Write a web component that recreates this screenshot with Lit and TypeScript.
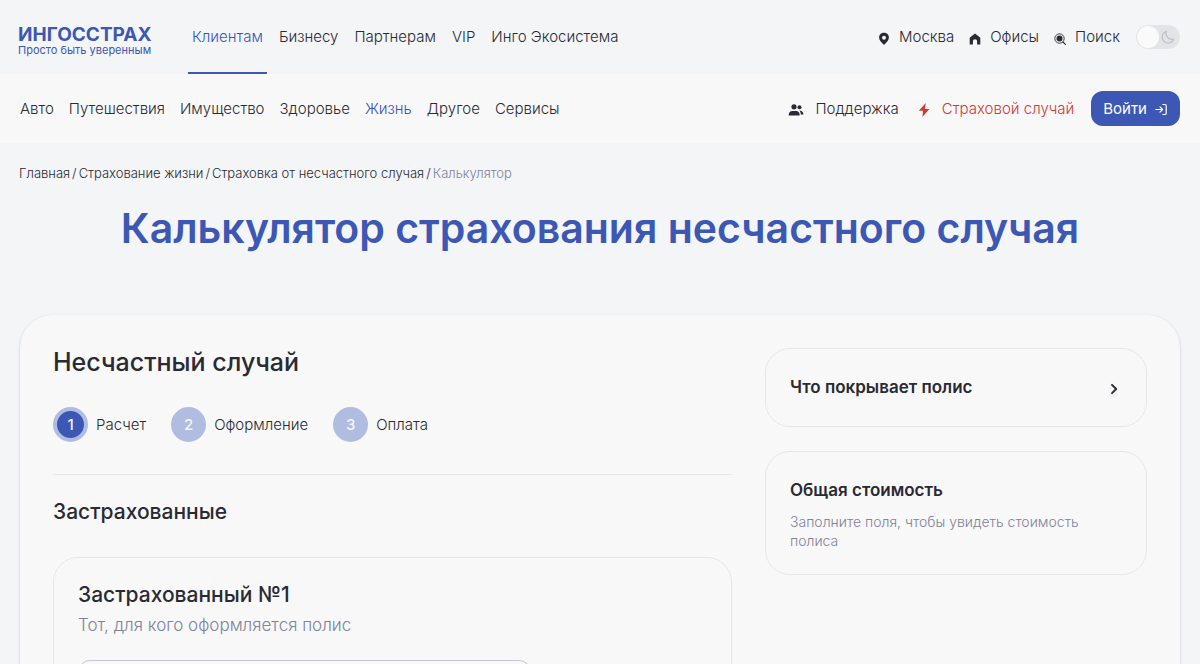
import { LitElement, html, css, svg } from "lit";
import { customElement, state } from "lit/decorators.js";
import { classMap } from "lit/directives/class-map.js";

const pin = svg`<svg class="icon" viewBox="0 0 16 16" aria-hidden="true"><path fill="currentColor" fill-rule="evenodd" d="M8 1.800c-2.800 0-4.900 2-4.900 4.800 0 1.900 1 3.300 2.300 4.700L8 14l2.600-2.700c1.300-1.400 2.300-2.800 2.300-4.700 0-2.800-2.100-4.800-4.900-4.800zm0 2.900a2 2 0 1 1 0 4 2 2 0 0 1 0-4z"/></svg>`;
const house = svg`<svg class="icon" viewBox="0 0 16 16" aria-hidden="true"><path fill="currentColor" d="M8 2.600l4.800 3.700c.4.300.5.600.5 1V13.500h-3.200v-3.200c0-1.300-.9-2.100-2.100-2.100s-2.100.8-2.100 2.100v3.200H2.700V7.300c0-.4.100-.7.500-1z"/></svg>`;
const search = svg`<svg class="icon" viewBox="0 0 16 16" aria-hidden="true"><circle cx="7.500" cy="7.500" r="4.700" fill="none" stroke="currentColor" stroke-width=".9"/><circle cx="7.500" cy="7.500" r="3" fill="currentColor"/><path d="M11 11l2.400 2.400" stroke="currentColor" stroke-width="1.100" stroke-linecap="round"/></svg>`;
const people = svg`<svg class="icon wide" viewBox="0 0 18 16" aria-hidden="true"><g fill="currentColor"><circle cx="7" cy="4.800" r="2.600"/><circle cx="12.500" cy="5.200" r="2"/><path d="M1.800 13.500v-1c0-2.200 1.500-3.400 3.500-3.400h3.800c2 0 3.500 1.200 3.500 3.400v1z"/><path d="M12.300 8.500c2.200 0 4.200 1.400 4.200 4.100h-2.700c0-1.700-.4-3-1.500-4.100z"/></g></svg>`;
const bolt = svg`<svg class="icon" viewBox="0 0 16 16" aria-hidden="true"><path fill="currentColor" d="M9.800 1L2.800 8.700h4.300L6.400 15l7-7.900H8.900z"/></svg>`;
const login = svg`<svg class="icon" viewBox="0 0 16 16" aria-hidden="true"><path d="M2.800 7.500h6.700M7 4.900l2.600 2.600L7 10.100M9.800 2.500h2.100c.8 0 1.300.5 1.300 1.300v7.400c0 .8-.5 1.300-1.300 1.300H9.800" fill="none" stroke="currentColor" stroke-width="1.200" stroke-linecap="round" stroke-linejoin="round"/></svg>`;
const moon = svg`<svg class="moon" viewBox="0 0 16 16" aria-hidden="true"><path d="M6.500 2.300a6 6 0 1 0 7.300 7.800A5.900 5.900 0 0 1 6.500 2.300z" fill="none" stroke="currentColor" stroke-width="1.200" stroke-linejoin="round"/></svg>`;
const chevron = svg`<svg class="chevron" viewBox="0 0 16 16" aria-hidden="true"><path d="M6 3.800L10.200 8 6 12.200" fill="none" stroke="currentColor" stroke-width="1.900" stroke-linecap="round" stroke-linejoin="round"/></svg>`;

@customElement("app-root")
export class AppRoot extends LitElement {
  @state() private dark = false;
  @state() private step = 1;

  private audiences = ["Клиентам", "Бизнесу", "Партнерам", "VIP", "Инго Экосистема"];
  private products = ["Авто", "Путешествия", "Имущество", "Здоровье", "Жизнь", "Другое", "Сервисы"];
  private crumbs = ["Главная", "Страхование жизни", "Страховка от несчастного случая"];
  private steps = ["Расчет", "Оформление", "Оплата"];

  static styles = css`
    :host {
      --blue: #3c57b4;
      --ink: #292a33;
      --muted: #7f829a;
      --line: #e6e7eb;
      --panel: #f8f8f8;
      display: block;
      min-height: 100vh;
      background: #f4f5f7;
      color: var(--ink);
      font: 300 15px/20px Inter, "Open Sans", sans-serif;
    }
    * { box-sizing: border-box; }
    a { color: inherit; text-decoration: none; white-space: nowrap; }
    h1, h2, h3, p { margin: 0; }
    .icon { width: 16px; height: 16px; flex: none; margin-top: 3px; }
    .wide { width: 18px; }
    .top, .bar {
      display: flex;
      align-items: center;
      justify-content: space-between;
      padding: 0 20px;
    }
    .top { height: 74px; padding-left: 18px; }
    .bar { height: 69px; background: var(--panel); }
    .left, .links, .tools { display: flex; align-items: center; }
    .left { height: 100%; gap: 36px; }
    .links { height: 100%; gap: 15px; }
    .audiences { gap: 8px; }
    .audiences a {
      display: flex;
      align-items: center;
      height: 100%;
      padding: 2px 4px 0;
      border-bottom: 2px solid transparent;
    }
    .audiences a.active { border-color: var(--blue); }
    .active { color: #3455c0; }
    .logo { display: block; width: 134px; color: var(--blue); padding-top: 8px; }
    .name { display: block; font-size: 19px; line-height: 18px; font-weight: 700; }
    .motto { display: block; font-size: 11px; line-height: 12px; font-weight: 400; }
    .tools { gap: 13px; }
    .tool { display: flex; align-items: center; gap: 7px; }
    .bar .tool { gap: 10px; }
    .bar .tools { gap: 17px; }
    .danger { color: #cf3a34; }
    .switch {
      position: relative;
      display: block;
      width: 44px;
      height: 24px;
      margin-left: 3px;
      color: #c0c1c7;
    }
    .switch input {
      appearance: none;
      display: block;
      width: 100%;
      height: 100%;
      margin: 0;
      border-radius: 12px;
      background: #e3e4e8;
      cursor: pointer;
    }
    .knob {
      position: absolute;
      top: 1px;
      left: 1px;
      width: 22px;
      height: 22px;
      border-radius: 50%;
      background: #fafafa;
      pointer-events: none;
    }
    .switch input:checked ~ .knob { left: 21px; }
    .moon {
      position: absolute;
      top: 4px;
      right: 4px;
      width: 16px;
      height: 16px;
      pointer-events: none;
    }
    button { font: inherit; color: inherit; border: 0; background: none; padding: 0; cursor: pointer; }
    .enter {
      display: flex;
      align-items: center;
      gap: 6px;
      height: 35px;
      padding: 0 11px 0 12px;
      border-radius: 12px;
      background: var(--blue);
      color: #fff;
      font-weight: 400;
    }
    .crumbs {
      display: flex;
      flex-wrap: wrap;
      gap: 2px;
      padding: 20px 19px 0;
      font-size: 13px;
      line-height: 20px;
    }
    .current { color: var(--muted); }
    h1 {
      padding: 20px 20px 0;
      color: var(--blue);
      font-size: 41px;
      line-height: 50px;
      font-weight: 600;
      text-align: center;
    }
    .card {
      display: grid;
      grid-template-columns: minmax(0, 16fr) minmax(0, 9fr);
      align-items: start;
      gap: 33px;
      margin: 62px 20px 0;
      padding: 33px;
      border-radius: 33px;
      background: var(--panel);
      box-shadow: 0 1px 3px rgba(40, 45, 70, 0.22);
    }
    h2 { font-size: 25px; line-height: 28px; font-weight: 500; }
    .steps {
      display: flex;
      gap: 25px;
      margin: 0;
      padding: 31px 0 32px;
      border-bottom: 1px solid var(--line);
      list-style: none;
    }
    .step { display: flex; align-items: center; gap: 8px; }
    .dot {
      display: grid;
      place-items: center;
      width: 35px;
      height: 35px;
      border: 4px solid #b1bce1;
      border-radius: 50%;
      background: #b1bce1;
      color: #f4f5f9;
      font-weight: 500;
    }
    .step.on .dot { background: var(--blue); }
    .section, .person h3 { font-size: 21px; line-height: 26px; font-weight: 500; }
    .section { padding: 24px 0 32px; }
    .person {
      padding: 24px 24px 32px;
      border: 1px solid var(--line);
      border-radius: 25px;
    }
    .person p { padding-top: 5px; font-size: 17px; line-height: 24px; color: var(--muted); }
    .field {
      display: block;
      width: 72%;
      height: 50px;
      margin-top: 23px;
      padding: 0 16px;
      border: 1px solid #c3c5d0;
      border-radius: 12px;
      background: #f9f9fa;
      font: inherit;
      color: inherit;
    }
    .side { display: grid; gap: 24px; }
    .box { border: 1px solid var(--line); border-radius: 25px; }
    .box h3, .cover { font-size: 17px; line-height: 20px; font-weight: 600; }
    .cover {
      display: flex;
      align-items: center;
      justify-content: space-between;
      width: 100%;
      height: 79px;
      padding: 0 24px 2px;
      text-align: left;
    }
    .chevron { width: 16px; height: 16px; margin-top: 4px; }
    .total { padding: 28px 24px 24px; }
    .total p { padding-top: 12px; font-size: 14px; line-height: 19px; color: var(--muted); }
  `;

  render() {
    return html`
      <header>
        <div class="top">
          <div class="left">
            <a class="logo" href="#"><span class="name">ИНГОССТРАХ</span><span class="motto">Просто быть уверенным</span></a>
            <nav class="links audiences">
              ${this.audiences.map((t, i) => html`<a href="#" class=${classMap({ active: i === 0 })}>${t}</a>`)}
            </nav>
          </div>
          <div class="tools">
            <a class="tool" href="#">${pin}Москва</a>
            <a class="tool" href="#">${house}Офисы</a>
            <a class="tool" href="#">${search}Поиск</a>
            <label class="switch">
              <input type="checkbox" role="switch" aria-label="Темная тема" .checked=${this.dark}
                @change=${() => (this.dark = !this.dark)} />
              <span class="knob"></span>${moon}
            </label>
          </div>
        </div>
        <div class="bar">
          <nav class="links">
            ${this.products.map((t) => html`<a href="#" class=${classMap({ active: t === "Жизнь" })}>${t}</a>`)}
          </nav>
          <div class="tools">
            <a class="tool" href="#">${people}Поддержка</a>
            <a class="tool danger" href="#">${bolt}Страховой случай</a>
            <button class="enter" type="button">Войти ${login}</button>
          </div>
        </div>
      </header>
      <main>
        <nav class="crumbs">
          ${this.crumbs.map((t) => html`<a href="#">${t}</a><span>/</span>`)}
          <span class="current">Калькулятор</span>
        </nav>
        <h1>Калькулятор страхования несчастного случая</h1>
        <div class="card">
          <section>
            <h2>Несчастный случай</h2>
            <ol class="steps">
              ${this.steps.map((t, i) => html`<li class=${classMap({ step: true, on: this.step === i + 1 })}><span class="dot">${i + 1}</span>${t}</li>`)}
            </ol>
            <h3 class="section">Застрахованные</h3>
            <div class="person">
              <h3>Застрахованный №1</h3>
              <p>Тот, для кого оформляется полис</p>
              <input class="field" type="text" aria-label="Застрахованный №1" />
            </div>
          </section>
          <aside class="side">
            <button class="box cover" type="button">Что покрывает полис ${chevron}</button>
            <div class="box total">
              <h3>Общая стоимость</h3>
              <p>Заполните поля, чтобы увидеть стоимость полиса</p>
            </div>
          </aside>
        </div>
      </main>
    `;
  }
}
